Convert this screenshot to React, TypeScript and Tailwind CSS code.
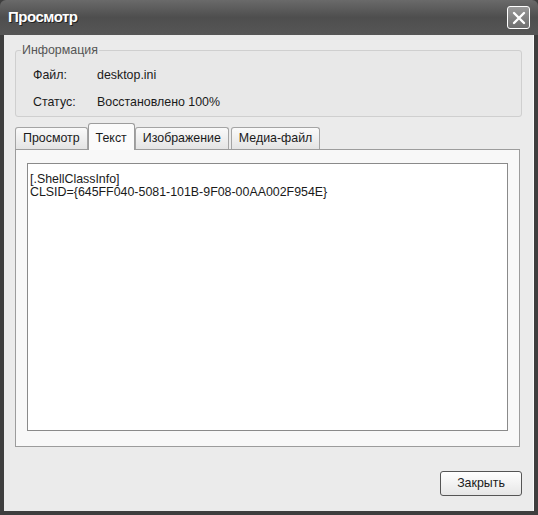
const tabs = ["Просмотр", "Текст", "Изображение", "Медиа-файл"];

function CloseButton() {
  return (
    <div className="flex h-[23px] w-[23px] items-center justify-center rounded-[3px] border border-white bg-gradient-to-b from-[#9a9a9a] to-[#6e6e6e]">
      <svg width="14" height="14" viewBox="0 0 14 14">
        <path d="M2 2 L12 12 M12 2 L2 12" stroke="#fff" strokeWidth="2.4" strokeLinecap="round" />
      </svg>
    </div>
  );
}

export default function App() {
  const active = 1;

  return (
    <div
      className="flex h-[515px] w-[538px] flex-col bg-[#3e3e3e] text-[12.4px] text-[#1a1a1a]"
      style={{ fontFamily: '"Liberation Sans", Arial, sans-serif' }}
    >
      <div className="flex h-[35px] items-center justify-between rounded-t-[6px] bg-gradient-to-b from-[#6a6a6a] via-[#4e4e4e] to-[#565656] pl-[8px] pr-[8px]">
        <span className="text-[15px] font-bold tracking-[-0.5px] text-white [text-shadow:1px_1px_0_#222]">
          Просмотр
        </span>
        <CloseButton />
      </div>

      <div className="mx-[4px] mb-[4px] flex flex-1 flex-col border-r border-[#fafafa] bg-[#ebebeb] px-[11px] pt-[9px]">
        <fieldset className="h-[73px] rounded-[3px] border border-[#cfcfcf] bg-[#e8e8e8] px-[17px]">
          <legend className="-ml-[12px] px-[1px] text-[12.4px] leading-none text-[#555]">Информация</legend>
          <div className="mt-[12px] grid grid-cols-[64px_1fr] gap-y-[13px] leading-[14px]">
            <span>Файл:</span>
            <span>desktop.ini</span>
            <span>Статус:</span>
            <span>Восстановлено 100%</span>
          </div>
        </fieldset>

        <div className="mt-[6px] mr-[2px] flex flex-col">
          <div className="flex h-[26px] items-end">
            {tabs.map((t, i) =>
              i === active ? (
                <div
                  key={t}
                  className="relative z-10 -mb-px -ml-[2px] flex h-[27px] items-start rounded-t-[3px] border border-b-0 border-[#9c9c9c] bg-[#fbfbfb] px-[7px] pt-[5px]"
                >
                  {t}
                </div>
              ) : (
                <div
                  key={t}
                  className="mr-[2px] flex h-[22px] items-center rounded-t-[3px] border border-b-0 border-[#a4a4a4] bg-gradient-to-b from-[#fafafa] to-[#e4e4e4] px-[7px]"
                >
                  {t}
                </div>
              )
            )}
          </div>
          <div className="h-[298px] border border-[#9c9c9c] bg-[#f8f8f8] px-[11px] pt-[13px] pb-[15px]">
            <div className="h-full border border-[#8a8a8a] bg-white px-[2px] pt-[9px] leading-[13px]">
              <div>[.ShellClassInfo]</div>
              <div>CLSID={"{"}645FF040-5081-101B-9F08-00AA002F954E{"}"}</div>
            </div>
          </div>
        </div>

        <div className="mt-[24px] flex justify-end">
          <button className="h-[25px] w-[82px] rounded-[3px] border border-[#555] bg-gradient-to-b from-white to-[#e6e6e6] text-[12.4px] text-[#1a1a1a]">
            Закрыть
          </button>
        </div>
      </div>
    </div>
  );
}
